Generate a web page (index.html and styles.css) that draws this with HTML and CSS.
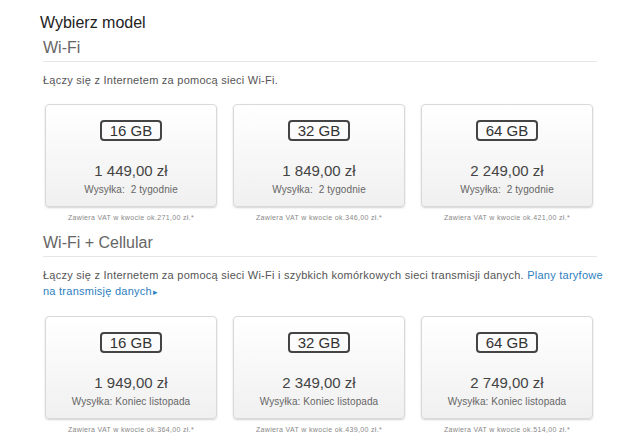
FILE: index.html
```html
<!DOCTYPE html>
<html lang="pl">
  <head>
    <meta charset="UTF-8" />
    <meta name="viewport" content="width=device-width, initial-scale=1.0" />
    <title>Wybierz model</title>
    <link rel="stylesheet" href="styles.css">
  </head>
  <body>
    <div class="page">
      <h1>Wybierz model</h1>

      <section class="group">
        <h2>Wi-Fi</h2>
        <p class="desc">Łączy się z Internetem za pomocą sieci Wi-Fi.</p>
        <div class="models">
          <div class="model">
            <div class="card">
              <span class="size">16 GB</span>
              <div class="price">1 449,00 zł</div>
              <div class="ship">Wysyłka:&nbsp; 2 tygodnie</div>
            </div>
            <div class="vat">Zawiera VAT w kwocie ok.271,00 zł.*</div>
          </div>
          <div class="model">
            <div class="card">
              <span class="size">32 GB</span>
              <div class="price">1 849,00 zł</div>
              <div class="ship">Wysyłka:&nbsp; 2 tygodnie</div>
            </div>
            <div class="vat">Zawiera VAT w kwocie ok.346,00 zł.*</div>
          </div>
          <div class="model">
            <div class="card">
              <span class="size">64 GB</span>
              <div class="price">2 249,00 zł</div>
              <div class="ship">Wysyłka:&nbsp; 2 tygodnie</div>
            </div>
            <div class="vat">Zawiera VAT w kwocie ok.421,00 zł.*</div>
          </div>
        </div>
      </section>

      <section class="group">
        <h2>Wi-Fi + Cellular</h2>
        <p class="desc">
          Łączy się z Internetem za pomocą sieci Wi-Fi i szybkich komórkowych sieci transmisji danych.
          <a href="#">Plany taryfowe na transmisję danych<span class="arrow">▸</span></a>
        </p>
        <div class="models">
          <div class="model">
            <div class="card">
              <span class="size">16 GB</span>
              <div class="price">1 949,00 zł</div>
              <div class="ship">Wysyłka: Koniec listopada</div>
            </div>
            <div class="vat">Zawiera VAT w kwocie ok.364,00 zł.*</div>
          </div>
          <div class="model">
            <div class="card">
              <span class="size">32 GB</span>
              <div class="price">2 349,00 zł</div>
              <div class="ship">Wysyłka: Koniec listopada</div>
            </div>
            <div class="vat">Zawiera VAT w kwocie ok.439,00 zł.*</div>
          </div>
          <div class="model">
            <div class="card">
              <span class="size">64 GB</span>
              <div class="price">2 749,00 zł</div>
              <div class="ship">Wysyłka: Koniec listopada</div>
            </div>
            <div class="vat">Zawiera VAT w kwocie ok.514,00 zł.*</div>
          </div>
        </div>
      </section>
    </div>
  </body>
</html>
```

FILE: styles.css
```css
body {
  margin: 0;
  background: #fff;
  color: #555;
  font-family: "Liberation Sans", Arial, sans-serif;
}

.page {
  padding: 13px 0 0 40px;
}

h1 {
  margin: 0;
  font-size: 16px;
  line-height: 20px;
  font-weight: normal;
  color: #222;
}

.group {
  width: 554px;
  margin-left: 3px;
}

.group h2 {
  margin: 4px 0 0;
  padding-bottom: 2px;
  border-bottom: 1px solid #e6e6e6;
  font-size: 16px;
  line-height: 22px;
  font-weight: normal;
  color: #666;
}

.group + .group h2 {
  margin-top: 9px;
}

.desc {
  width: 565px;
  margin: 10px 0 0;
  font-size: 11px;
  line-height: 16px;
  letter-spacing: 0.25px;
}

.desc a {
  color: #2f80c0;
  text-decoration: none;
}

.arrow {
  font-size: 9px;
  margin-left: 1px;
}

.models {
  display: grid;
  grid-template-columns: repeat(3, 172px);
  gap: 16px;
  margin-top: 16px;
  padding-left: 2px;
}

.card {
  box-sizing: border-box;
  height: 103px;
  padding-top: 15px;
  text-align: center;
  background: linear-gradient(#fff, #f0f0f0);
  border: 1px solid #d9d9d9;
  border-radius: 4px;
  box-shadow: 0 1px 2px rgba(0, 0, 0, 0.18);
}

.size {
  display: inline-block;
  box-sizing: border-box;
  height: 21px;
  padding: 0 8px;
  border: 2px solid #444;
  border-radius: 4px;
  font-size: 15px;
  line-height: 17px;
  color: #333;
}

.price {
  margin-top: 21px;
  font-size: 15px;
  line-height: 18px;
  color: #444;
}

.ship {
  margin-top: 3px;
  font-size: 10px;
  line-height: 14px;
  letter-spacing: 0.1px;
  color: #666;
}

.vat {
  margin-top: 6px;
  font-size: 7px;
  line-height: 10px;
  letter-spacing: 0.35px;
  text-align: center;
  color: #888;
}
```
